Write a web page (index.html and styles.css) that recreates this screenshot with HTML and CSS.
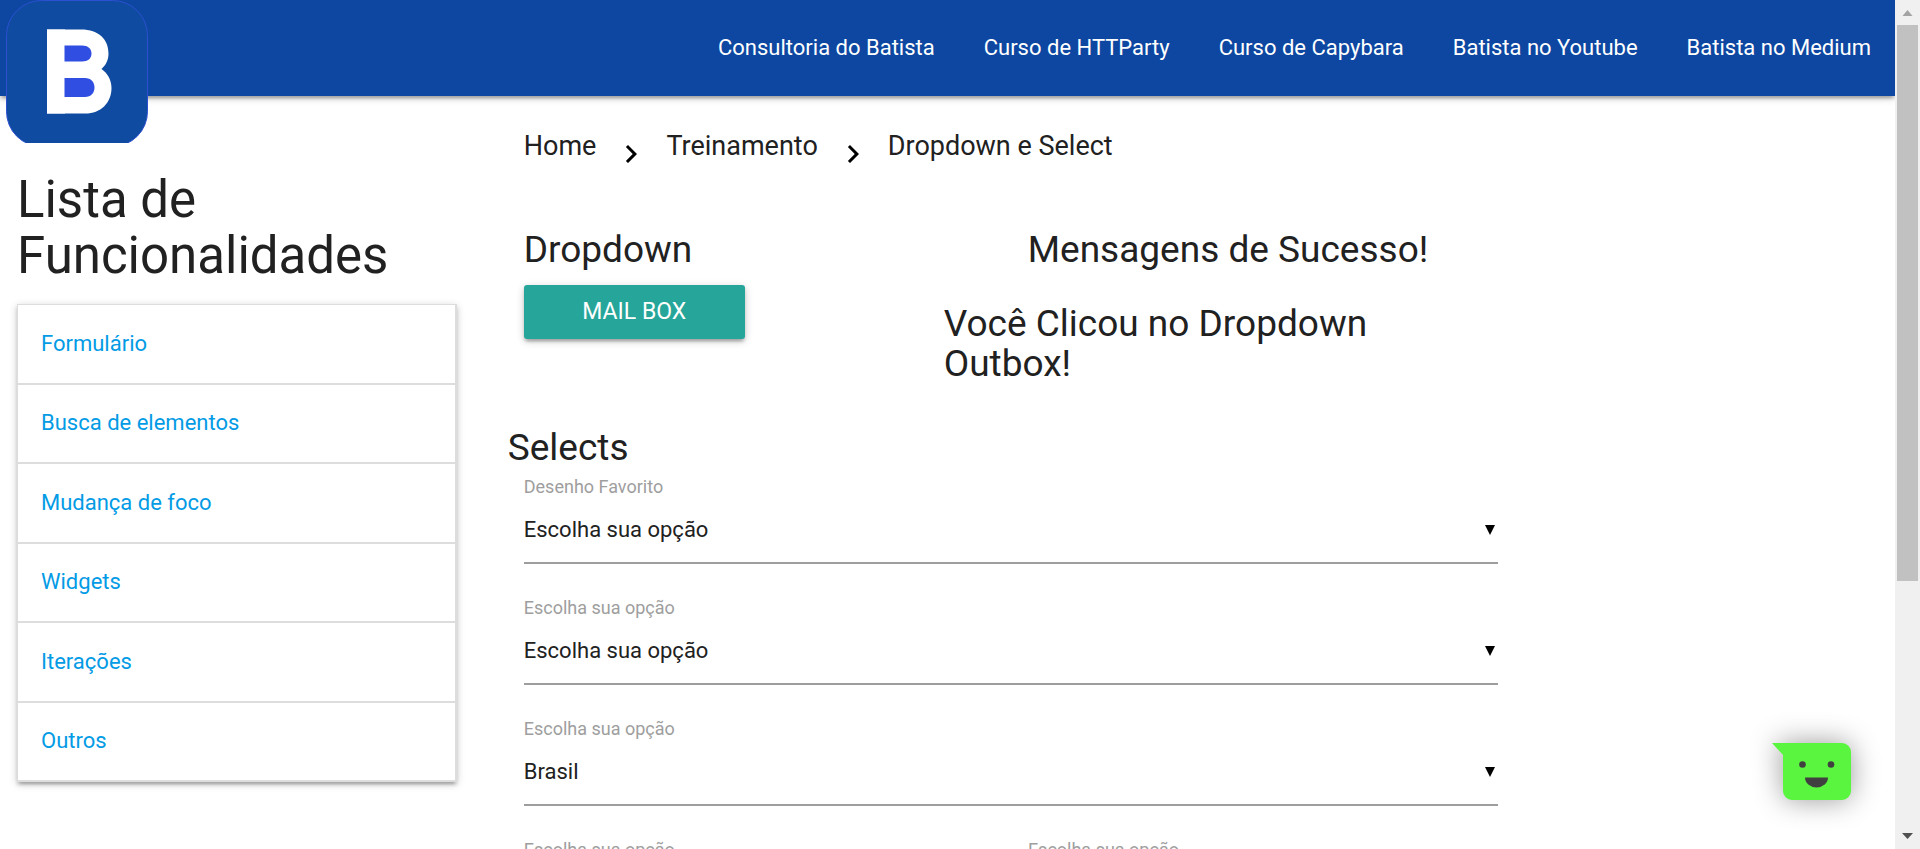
FILE: index.html
```html
<!DOCTYPE html>
<html lang="pt-BR">
<head>
  <meta charset="utf-8">
  <title>Dropdown e Select</title>
  <link rel="stylesheet" href="styles.css">
</head>
<body>
  <div class="shell">
    <div class="page">
      <header class="navbar">
        <a class="logo" href="#" aria-label="Batista">
          <svg viewBox="0 0 142 143" aria-hidden="true">
            <rect x="0.500" y="0.500" width="141" height="146" rx="35" fill="#0f4ba0" stroke="#2c50d0"/>
            <g fill="#fff">
              <rect x="41" y="29.500" width="18" height="84"/>
              <path d="M41 29.500h34c18 0 27.500 10 27.500 24 0 7-3 12-7 15.500 6 4 10 11 10 19 0 15-11 25.500-26 25.500H41z"/>
            </g>
            <path d="M58.500 45.500H76c6 0 9.500 3 9.500 8s-3.500 8-9.500 8H58.500zM58.500 78H79c6 0 9.500 4 9.500 9.500S85 97 79 97H58.500z" fill="#304fe2"/>
          </svg>
        </a>
        <nav class="navbar-links">
          <a href="#">Consultoria do Batista</a>
          <a href="#">Curso de HTTParty</a>
          <a href="#">Curso de Capybara</a>
          <a href="#">Batista no Youtube</a>
          <a href="#">Batista no Medium</a>
        </nav>
      </header>
      <div class="columns">
        <aside class="sidebar">
          <h4 class="sidebar-title">Lista de Funcionalidades</h4>
          <ul class="menu">
            <li><a href="#">Formulário</a></li>
            <li><a href="#">Busca de elementos</a></li>
            <li><a href="#">Mudança de foco</a></li>
            <li><a href="#">Widgets</a></li>
            <li><a href="#">Iterações</a></li>
            <li><a href="#">Outros</a></li>
          </ul>
        </aside>
        <main class="content">
          <nav class="breadcrumbs" aria-label="Breadcrumb">
            <a href="#">Home</a>
            <svg class="chevron" viewBox="0 0 24 24" aria-hidden="true"><path d="M10 6L8.590 7.410 13.170 12l-4.580 4.590L10 18l6-6z"/></svg>
            <a href="#">Treinamento</a>
            <svg class="chevron" viewBox="0 0 24 24" aria-hidden="true"><path d="M10 6L8.590 7.410 13.170 12l-4.580 4.590L10 18l6-6z"/></svg>
            <a href="#">Dropdown e Select</a>
          </nav>
          <section class="demo">
            <div class="demo-dropdown">
              <h5 class="heading">Dropdown</h5>
              <button class="btn" type="button">Mail Box</button>
            </div>
            <div class="demo-messages">
              <h5 class="heading messages-title">Mensagens de Sucesso!</h5>
              <h5 class="heading">Você Clicou no Dropdown Outbox!</h5>
            </div>
          </section>
          <section class="selects">
            <h5 class="heading">Selects</h5>
            <div class="fields">
              <div class="field field-wide">
                <label for="desenho">Desenho Favorito</label>
                <div class="select-wrap">
                  <select id="desenho"><option>Escolha sua opção</option></select>
                  <svg class="caret" viewBox="0 0 10 10" aria-hidden="true"><path d="M0 0h10L5 10z"/></svg>
                </div>
              </div>
              <div class="field field-wide">
                <label for="opcao">Escolha sua opção</label>
                <div class="select-wrap">
                  <select id="opcao"><option>Escolha sua opção</option></select>
                  <svg class="caret" viewBox="0 0 10 10" aria-hidden="true"><path d="M0 0h10L5 10z"/></svg>
                </div>
              </div>
              <div class="field field-wide">
                <label for="pais">Escolha sua opção</label>
                <div class="select-wrap">
                  <select id="pais"><option>Brasil</option></select>
                  <svg class="caret" viewBox="0 0 10 10" aria-hidden="true"><path d="M0 0h10L5 10z"/></svg>
                </div>
              </div>
              <div class="field">
                <label for="esquerda">Escolha sua opção</label>
                <div class="select-wrap">
                  <select id="esquerda"><option>Escolha sua opção</option></select>
                  <svg class="caret" viewBox="0 0 10 10" aria-hidden="true"><path d="M0 0h10L5 10z"/></svg>
                </div>
              </div>
              <div class="field">
                <label for="direita">Escolha sua opção</label>
                <div class="select-wrap">
                  <select id="direita"><option>Escolha sua opção</option></select>
                  <svg class="caret" viewBox="0 0 10 10" aria-hidden="true"><path d="M0 0h10L5 10z"/></svg>
                </div>
              </div>
            </div>
          </section>
        </main>
      </div>
      <button class="chat" type="button" aria-label="Chat">
        <svg viewBox="0 0 79 57" aria-hidden="true">
          <path d="M0 0h70a9 9 0 0 1 9 9v39a9 9 0 0 1-9 9H20a9 9 0 0 1-9-9V12z" fill="#5af53e"/>
          <circle cx="30.500" cy="21.500" r="3.300" fill="#404040"/>
          <circle cx="59" cy="21.500" r="3.300" fill="#404040"/>
          <path d="M33 34.500h23a11.500 10 0 0 1-23 0z" fill="#404040"/>
        </svg>
      </button>
    </div>
    <div class="scrollbar" aria-hidden="true">
      <svg class="scroll-arrow" viewBox="0 0 25 25"><path d="M7.500 16h10l-5-6z" fill="#a3a3a3"/></svg>
      <div class="scroll-track"><div class="scroll-thumb"></div></div>
      <svg class="scroll-arrow" viewBox="0 0 25 25"><path d="M7 9h11l-5.500 6z" fill="#505050"/></svg>
    </div>
  </div>
</body>
</html>
```
FILE: styles.css
```css
* {
  box-sizing: border-box;
}

body {
  margin: 0;
  background: #fff;
  color: #212121;
  font-family: Roboto, "Liberation Sans", sans-serif;
  font-size: 22px;
  line-height: 34px;
}

a {
  color: inherit;
  text-decoration: none;
}

.shell {
  display: grid;
  grid-template-columns: minmax(0, 1fr) 25px;
  height: 100vh;
}

.page {
  position: relative;
  overflow: hidden;
}

.navbar {
  position: relative;
  display: flex;
  align-items: center;
  justify-content: flex-end;
  height: 96px;
  background: #0d47a1;
  color: #fff;
  box-shadow: 0 3px 3px rgba(0, 0, 0, 0.14), 0 5px 2px -3px rgba(0, 0, 0, 0.12), 0 2px 8px rgba(0, 0, 0, 0.2);
}

.logo {
  position: absolute;
  top: 0;
  left: 6px;
  width: 142px;
}

.logo svg,
.chat svg {
  display: block;
  width: 100%;
}

.navbar-links {
  display: flex;
  gap: 49px;
  padding-right: 24px;
}

.columns {
  display: grid;
  grid-template-columns: 25% minmax(0, 1fr);
}

.sidebar {
  padding: 76px 17px 0;
}

.sidebar-title {
  margin: 0 0 20px;
  font-size: 51px;
  font-weight: 400;
  line-height: 56px;
}

.menu {
  display: flex;
  flex-direction: column;
  min-height: 478px;
  margin: 0;
  padding: 0;
  list-style: none;
  border: 1px solid #ddd;
  border-right-width: 2px;
  border-bottom: 0;
  box-shadow: 0 3px 3px rgba(0, 0, 0, 0.14), 0 5px 2px -3px rgba(0, 0, 0, 0.12), 0 2px 8px rgba(0, 0, 0, 0.2);
}

.menu li {
  display: flex;
  flex: 1;
  align-items: center;
  padding: 0 23px;
  border-bottom: 2px solid #ddd;
  color: #039be5;
}

.content {
  padding: 0 381px 0 34px;
}

.breadcrumbs {
  display: flex;
  align-items: flex-start;
  gap: 17px;
  padding: 33px 16px 0;
  font-size: 27px;
}

.chevron {
  width: 36px;
  height: 36px;
  margin-top: 7px;
}

.heading {
  margin: 0;
  font-size: 37px;
  font-weight: 400;
  line-height: 40px;
}

.demo {
  display: grid;
  grid-template-columns: 420px minmax(0, 1fr);
  padding: 58px 16px 0;
}

.btn {
  display: block;
  width: 221px;
  height: 54px;
  margin-top: 15px;
  padding: 0;
  border: 0;
  border-radius: 3px;
  background: #26a69a;
  color: #fff;
  font: inherit;
  font-size: 23px;
  line-height: 54px;
  text-transform: uppercase;
  box-shadow: 0 3px 3px rgba(0, 0, 0, 0.14), 0 5px 2px -3px rgba(0, 0, 0, 0.12), 0 2px 8px rgba(0, 0, 0, 0.2);
}

.demo-messages {
  padding-right: 84px;
}

.messages-title {
  padding-left: 84px;
  margin: 0 -84px 34px 0;
}

.selects {
  padding-top: 44px;
}

.fields {
  display: grid;
  grid-template-columns: 1fr 1fr;
  column-gap: 34px;
  row-gap: 34px;
  padding: 9px 16px 0;
}

.field-wide {
  grid-column: 1 / -1;
}

.field label {
  display: block;
  color: #9e9e9e;
  font-size: 18px;
  line-height: 20px;
}

.select-wrap {
  position: relative;
}

.select-wrap select {
  display: block;
  width: 100%;
  height: 67px;
  padding: 0;
  border: 0;
  border-bottom: 2px solid #9e9e9e;
  border-radius: 0;
  appearance: none;
  background: transparent;
  color: #212121;
  font: inherit;
}

.caret {
  position: absolute;
  top: 28px;
  right: 3px;
  width: 10px;
  height: 10px;
}

.chat {
  position: absolute;
  right: 44px;
  bottom: 49px;
  width: 79px;
  padding: 0;
  border: 0;
  background: none;
  filter: drop-shadow(0 0 14px rgba(0, 0, 0, 0.4));
}

.scrollbar {
  display: flex;
  flex-direction: column;
  background: #f0f0f0;
}

.scroll-arrow {
  height: 25px;
}

.scroll-track {
  flex: 1;
  padding: 0 2px;
}

.scroll-thumb {
  height: 69.6%;
  background: #c1c1c1;
}
```
